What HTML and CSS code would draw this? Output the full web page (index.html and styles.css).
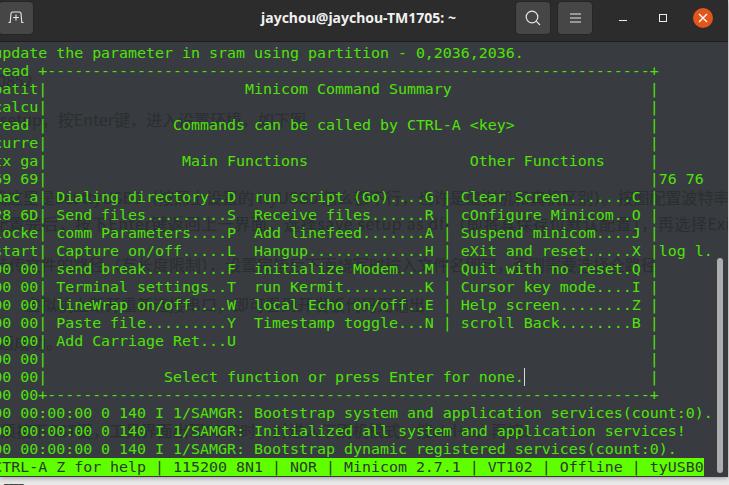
FILE: index.html
```html
<!DOCTYPE html>
<html lang="zh">
<head>
<meta charset="utf-8">
<title>jaychou@jaychou-TM1705: ~</title>
<link rel="stylesheet" href="styles.css">
</head>
<body>
<div class="window">
  <header class="titlebar">
    <button class="tbtn tbtn-new" aria-label="New tab">
      <svg width="16" height="14" viewBox="0 0 16 14" fill="none" stroke="#e8e8e8" stroke-width="1.1"><path d="M0.5 11.5H2.2L3 2.6Q3.1 1 4.6 1H11.4Q12.9 1 13 2.6L13.8 11.5H15.5"/><path d="M8 3.6V9.4M5.1 6.5H10.9"/></svg>
    </button>
    <div class="title">jaychou@jaychou-TM1705: ~</div>
    <button class="tbtn tbtn-search" aria-label="Search">
      <svg width="16" height="16" viewBox="0 0 16 16" fill="none" stroke="#e8e8e8" stroke-width="1.2"><circle cx="7" cy="7" r="5.8"/><path d="M11.2 11.2L15 15"/></svg>
    </button>
    <button class="tbtn tbtn-menu" aria-label="Menu">
      <svg width="11" height="10" viewBox="0 0 11 10" fill="none" stroke="#e8e8e8" stroke-width="1"><path d="M0 1H11M0 5H11M0 9H11"/></svg>
    </button>
    <div class="wctl">
      <span class="w-min"></span>
      <span class="w-max"></span>
      <span class="w-close"><svg width="10" height="10" viewBox="0 0 10 10" fill="none" stroke="#fff" stroke-width="1.3"><path d="M1 1L9 9M9 1L1 9"/></svg></span>
    </div>
  </header>
  <main class="term">
    <div class="ghosts">
      <div class="g g1">0852</div>
      <div class="g g2">setup，按Enter键，进入设置环境，如下图</div>
      <div class="g g3">我这里是act ttyUSB0（按照上设置的 ttyUSB0 怎么都不行，也许是虚拟机和真机区别）。按图配置波特率</div>
      <div class="g g4">配置完后，按下Enter键返回上一界面，选择save setup as dfl（即将其保存位默认配置），再选择Exit</div>
      <div class="g g5">待传文件的路径（有长度限制），设置完毕后下面烧写时输入文件名即可，否则需要选择全路径</div>
      <div class="g g6">虚拟机上断开重新连接串口，即可看到开发板代码无输出</div>
      <div class="g g7">连通成功。</div>
      <div class="g g8">须按下RST键，工具界面出现0000时，对进入下刷机模式，按ctrl+a，再按s</div>
    </div>
    <pre class="screen"><div class="row">update the parameter in sram using partition - 0,2036,2036.</div><div class="row">read +-------------------------------------------------------------------+</div><div class="row">patit|                      Minicom Command Summary                      |</div><div class="row">calcu|                                                                   |</div><div class="row">read |              Commands can be called by CTRL-A &lt;key&gt;               |</div><div class="row">curre|                                                                   |</div><div class="row">tx ga|               Main Functions                  Other Functions     |</div><div class="row">69 69|                                                                   |76 76</div><div class="row">mac a| Dialing directory..D  run script (Go)....G | Clear Screen.......C |</div><div class="row">28 6D| Send files.........S  Receive files......R | cOnfigure Minicom..O |</div><div class="row">locke| comm Parameters....P  Add linefeed.......A | Suspend minicom....J |</div><div class="row">start| Capture on/off.....L  Hangup.............H | eXit and reset.....X |log l.</div><div class="row">00 00| send break.........F  initialize Modem...M | Quit with no reset.Q |</div><div class="row">00 00| Terminal settings..T  run Kermit.........K | Cursor key mode....I |</div><div class="row">00 00| lineWrap on/off....W  local Echo on/off..E | Help screen........Z |</div><div class="row">00 00| Paste file.........Y  Timestamp toggle...N | scroll Back........B |</div><div class="row">00 00| Add Carriage Ret...U                                              |</div><div class="row">00 00|                                                                   |</div><div class="row">00 00|             Select function or press Enter for none.<span class="cursor"></span>              |</div><div class="row">00 00+-------------------------------------------------------------------+</div><div class="row">00 00:00:00 0 140 I 1/SAMGR: Bootstrap system and application services(count:0).</div><div class="row">00 00:00:00 0 140 I 1/SAMGR: Initialized all system and application services!</div><div class="row">00 00:00:00 0 140 I 1/SAMGR: Bootstrap dynamic registered services(count:0).</div><div class="row"><span class="status">CTRL-A Z for help | 115200 8N1 | NOR | Minicom 2.7.1 | VT102 | Offline | tyUSB0</span></div></pre>
    <div class="thumb"></div>
  </main>
</div>
<div class="under">____</div>
</body>
</html>
```
FILE: styles.css
```css
* { box-sizing: border-box; }
html, body { margin: 0; height: 100%; overflow: hidden; }
body { width: 729px; height: 485px; background: #e9e9e9; font-family: "Noto Sans CJK SC", "Noto Sans", sans-serif; }
.window { width: 728px; height: 477px; display: flex; flex-direction: column; background: #383b3f; box-shadow: 0 1px 5px rgba(0,0,0,.35); overflow: hidden; }
.titlebar { height: 42px; flex: none; display: flex; align-items: flex-start; padding-top: 2px; background: #2c2c2c; border-bottom: 1px solid #1d1d1d; }
.tbtn { width: 34px; height: 32px; flex: none; padding: 0; border: 0; border-radius: 4px; background: #464646; box-shadow: 0 0 0 1px #262626; display: flex; align-items: center; justify-content: center; }
.tbtn-new { margin-left: -1px; }
.tbtn-menu { margin-left: 8px; }
.title { flex: 1; text-align: center; color: #f0f0f0; font: 700 14px/32px "Noto Sans", sans-serif; padding-left: 168px; white-space: nowrap; }
.wctl { width: 136px; height: 32px; flex: none; display: flex; align-items: center; position: relative; }
.w-min { width: 8px; height: 1px; background: #eee; margin: 5px 0 0 27px; }
.w-max { width: 8px; height: 8px; border: 1px solid #eee; margin-left: 32px; }
.w-close { width: 20px; height: 20px; border-radius: 50%; background: #e2561b; margin-left: 26px; display: flex; align-items: center; justify-content: center; }
.term { position: relative; flex: 1; overflow: hidden; }
.screen { position: relative; margin: 2px 0 0 -6.8px; font: 14.95px/18px "DejaVu Sans Mono", monospace; color: #4fe30a; white-space: pre; }
.row { height: 18px; }
.status { display: inline-block; height: 18px; background: #5fff00; color: #2c3a2c; }
.cursor { display: inline-block; width: 1px; height: 18px; margin-right: -1px; background: #d8d8d8; vertical-align: top; }
.ghosts { position: absolute; inset: 0; color: #2b2e32; font-size: 16px; line-height: 20px; white-space: nowrap; }
.g { position: absolute; }
.g1 { left: -3px; top: 28px; }
.g2 { left: 0; top: 67px; }
.g3 { left: -9px; top: 145px; }
.g4 { left: -8px; top: 171px; letter-spacing: .6px; }
.g5 { left: -7px; top: 212px; }
.g6 { left: 25px; top: 252px; }
.g7 { left: -18px; top: 290px; }
.g8 { left: 0; top: 378px; }
.thumb { position: absolute; left: 717px; top: 216px; width: 6px; height: 215px; border-radius: 3px; background: #adadad; }
.under { color: #333; font: 700 12px/8px "Noto Sans", sans-serif; margin-top: -2px; padding-left: 4px; }
```
